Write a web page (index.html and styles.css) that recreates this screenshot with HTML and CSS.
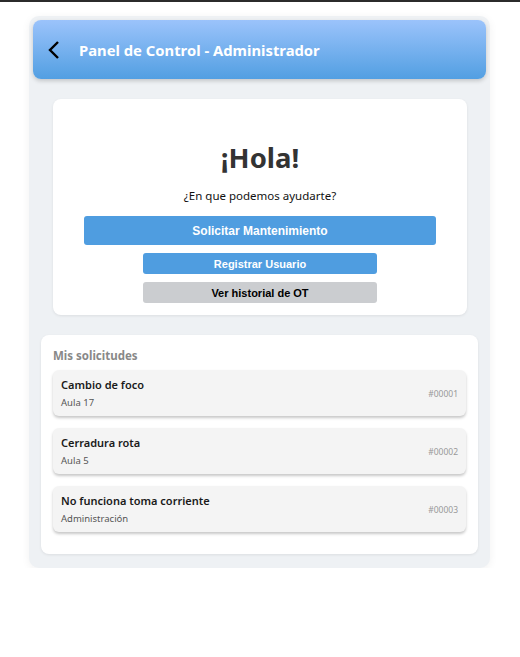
FILE: index.html
```html
<!DOCTYPE html>
<html lang="es">
<head>
<meta charset="utf-8">
<title>Panel de Control</title>
<link rel="stylesheet" href="styles.css">
</head>
<body>
<div class="topline"></div>
<div class="app">
  <header class="header">
    <span class="back">
      <svg width="14" height="20" viewBox="0 0 14 20"><path d="M11 2 L3 10 L11 18" fill="none" stroke="#000" stroke-width="2.4" stroke-linecap="butt"/></svg>
    </span>
    <h1 class="title">Panel de Control - Administrador</h1>
  </header>
  <section class="hello-card">
    <h2 class="hello">¡Hola!</h2>
    <p class="ask">¿En que podemos ayudarte?</p>
    <button class="btn btn-main">Solicitar Mantenimiento</button>
    <button class="btn btn-small">Registrar Usuario</button>
    <button class="btn btn-small btn-gray">Ver historial de OT</button>
  </section>
  <section class="list-card">
    <h3 class="list-title">Mis solicitudes</h3>
    <div class="item">
      <div class="item-text">
        <div class="item-name">Cambio de foco</div>
        <div class="item-place">Aula 17</div>
      </div>
      <div class="item-id">#00001</div>
    </div>
    <div class="item">
      <div class="item-text">
        <div class="item-name">Cerradura rota</div>
        <div class="item-place">Aula 5</div>
      </div>
      <div class="item-id">#00002</div>
    </div>
    <div class="item">
      <div class="item-text">
        <div class="item-name">No funciona toma corriente</div>
        <div class="item-place">Administración</div>
      </div>
      <div class="item-id">#00003</div>
    </div>
  </section>
</div>
</body>
</html>
```

FILE: styles.css
```css
* { box-sizing: border-box; }
html, body { margin: 0; padding: 0; background: #fff; }
body { font-family: "Noto Sans", "Open Sans", sans-serif; }
.topline { height: 2px; background: #2b2b2b; }
.app {
  margin: 14px 30px 0 29px;
  padding: 4px 4px 14px;
  background: #eef1f4;
  border-radius: 10px;
  box-shadow: 0 2px 8px rgba(0,0,0,0.06);
}
.header {
  height: 59px;
  display: flex;
  align-items: center;
  padding-left: 14px;
  border-radius: 8px;
  background: linear-gradient(to bottom, #9bc3fb, #529fe2);
  box-shadow: 0 2px 4px rgba(0,0,0,0.18);
}
.back { display: flex; width: 14px; height: 20px; margin-right: 18px; }
.title {
  margin: 0;
  color: #fff;
  font-size: 14.8px;
  font-weight: 700;
}
.hello-card {
  margin: 20px 19px 0 20px;
  background: #fff;
  border-radius: 8px;
  box-shadow: 0 1px 3px rgba(0,0,0,0.08);
  display: flex;
  flex-direction: column;
  align-items: center;
  padding: 40px 31px 12px;
}
.hello {
  margin: 0;
  font-size: 27.5px;
  font-weight: 700;
  color: #333;
  line-height: 38px;
}
.ask {
  margin: 11px 0 12px;
  font-size: 11.5px;
  color: #111;
  line-height: 16px;
}
.btn {
  border: none;
  border-radius: 3px;
  background: #4f9de0;
  color: #fff;
  font-family: "Liberation Sans", Arial, sans-serif;
  font-weight: 700;
  padding: 0;
}
.btn-main { width: 100%; height: 29px; font-size: 12px; }
.btn-small { width: 234px; height: 21px; font-size: 11px; margin-top: 8px; }
.btn-gray { background: #cbcdd0; color: #000; }
.list-card {
  margin: 20px 8px 0;
  background: #fff;
  border-radius: 8px;
  box-shadow: 0 1px 3px rgba(0,0,0,0.08);
  padding: 12px 12px 22px;
}
.list-title {
  margin: 0 0 6px;
  font-size: 11.5px;
  font-weight: 700;
  color: #888;
  line-height: 17px;
}
.item {
  height: 46px;
  margin-bottom: 12px;
  background: #f4f4f4;
  border-radius: 6px;
  box-shadow: 0 2px 3px rgba(0,0,0,0.22);
  display: flex;
  align-items: center;
  justify-content: space-between;
  padding: 0 8px;
}
.item:last-child { margin-bottom: 0; }
.item-name { font-size: 11px; font-weight: 600; color: #1a1a1a; line-height: 15px; }
.item-place { font-size: 9.5px; color: #555; line-height: 14px; margin-top: 4px; }
.item-id { font-size: 8.5px; color: #999; }
```
